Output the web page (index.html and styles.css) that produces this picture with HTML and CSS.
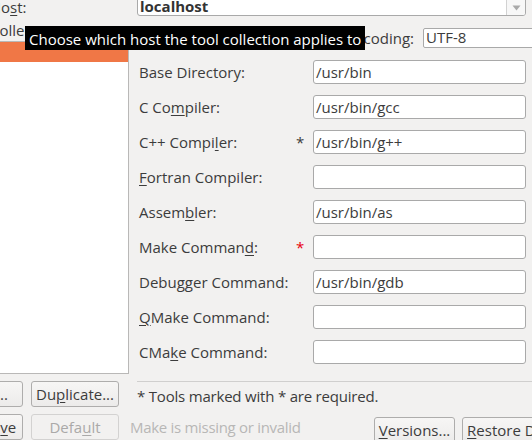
FILE: index.html
```html
<!DOCTYPE html>
<html>
<head>
<meta charset="utf-8">
<title>Build Tools</title>
<link rel="stylesheet" href="styles.css">
</head>
<body>
<div class="dialog">
  <div class="host-row">
    <div class="host-label">Ho<u>s</u>t:</div>
    <div class="combo">
      <span class="combo-text">localhost</span>
      <span class="combo-arrow"><svg width="9" height="6" viewBox="0 0 9 6"><path d="M0.5 0.5 L8.5 0.5 L4.5 5.5 Z" fill="#a9a9a9"/></svg></span>
    </div>
  </div>
  <div class="main">
    <div class="left">
      <div class="tc-label">Tool Collection:</div>
      <div class="list">
        <div class="list-item selected"></div>
      </div>
      <div class="btn-row">
        <button class="btn narrow">Add...</button>
        <button class="btn">Du<u>p</u>licate...</button>
      </div>
    </div>
    <div class="right">
      <div class="enc-row">
        <span class="enc-label">Encoding:</span>
        <div class="field enc-field">UTF-8</div>
      </div>
      <div class="form">
        <div class="lbl">Base Directory:</div><div class="star"></div><div class="field">/usr/bin</div>
        <div class="lbl">C Co<u>m</u>piler:</div><div class="star"></div><div class="field">/usr/bin/gcc</div>
        <div class="lbl">C++ Compi<u>l</u>er:</div><div class="star">*</div><div class="field">/usr/bin/g++</div>
        <div class="lbl"><u>F</u>ortran Compiler:</div><div class="star"></div><div class="field"></div>
        <div class="lbl">Assem<u>b</u>ler:</div><div class="star"></div><div class="field">/usr/bin/as</div>
        <div class="lbl">Make Comman<u>d</u>:</div><div class="star red">*</div><div class="field"></div>
        <div class="lbl">Debu<u>g</u>ger Command:</div><div class="star"></div><div class="field">/usr/bin/gdb</div>
        <div class="lbl"><u>Q</u>Make Command:</div><div class="star"></div><div class="field"></div>
        <div class="lbl">CMa<u>k</u>e Command:</div><div class="star"></div><div class="field"></div>
      </div>
      <div class="sep"></div>
      <div class="note">* Tools marked with * are required.</div>
    </div>
  </div>
  <div class="bottom-row">
    <button class="btn narrow">Remo<u>v</u>e</button>
    <button class="btn" disabled>Defa<u>u</u>lt</button>
    <span class="msg">Make is missing or invalid</span>
    <div class="right-btns">
      <button class="btn versions"><u>V</u>ersions...</button>
      <button class="btn restore"><u>R</u>estore Defaults</button>
    </div>
  </div>
</div>
<div class="tooltip">Choose which host the tool collection applies to</div>
</body>
</html>
```
FILE: styles.css
```css
* { box-sizing: border-box; }
html, body { margin: 0; padding: 0; }
body {
  width: 532px;
  height: 440px;
  overflow: hidden;
  position: relative;
  background: #f2f1f0;
  font-family: "Open Sans", "DejaVu Sans", sans-serif;
  font-size: 15px;
  color: #3c3c3c;
}
u { text-decoration: underline; text-underline-offset: 2px; text-decoration-thickness: 1px; }

.dialog {
  margin-left: -47px;
  margin-top: -5px;
  width: 635px;
}

.host-row { display: flex; height: 21px; }
.host-label {
  width: 184px;
  padding-left: 37px;
  padding-top: 2px;
  line-height: 20px;
}
.combo {
  width: 389px;
  height: 21px;
  background: #fff;
  border: 1px solid #a9a9a9;
  border-radius: 3px;
  display: flex;
  justify-content: space-between;
}
.combo-text {
  font-weight: 700;
  padding-left: 2px;
  padding-top: 1px;
  line-height: 19px;
  color: #333;
}
.combo-arrow {
  width: 19px;
  border-left: 1px solid #d2d2d2;
  background: #f7f7f7;
  border-radius: 0 2px 2px 0;
  display: flex;
  align-items: center;
  justify-content: center;
  padding-top: 4px;
}

.main {
  display: grid;
  grid-template-columns: 176px 1fr;
  column-gap: 8px;
  align-items: start;
}

.tc-label {
  margin-top: 4px;
  line-height: 20px;
  padding-left: 3px;
  white-space: nowrap;
}
.list {
  margin-top: 1px;
  height: 333px;
  background: #fff;
  border: 1px solid #b9b8b7;
}
.list-item { height: 20px; }
.list-item.selected { background: #f07746; }

.btn-row { display: flex; gap: 8px; margin-top: 7px; }

.btn {
  font-family: inherit;
  font-size: 15px;
  color: #3c3c3c;
  width: 88px;
  height: 26px;
  padding: 0;
  line-height: 24px;
  border: 1px solid #aeadac;
  border-radius: 3px;
  background: linear-gradient(#f7f6f5, #ecebea);
  text-align: center;
  white-space: nowrap;
}
.btn.narrow { width: 70px; }
.btn:disabled {
  color: #aaa9a8;
  border-color: #d3d2d1;
  background: #f2f1f0;
}

.enc-row { display: flex; gap: 9px; margin-top: 12px; height: 20px; }
.enc-label { width: 277px; text-align: right; line-height: 20px; }

.field {
  height: 24px;
  background: #fff;
  border: 1px solid #a9a9a9;
  border-radius: 3px;
  padding-left: 2px;
  line-height: 22px;
  white-space: nowrap;
  overflow: hidden;
}
.enc-field {
  width: 200px;
  height: 20px;
  line-height: 16px;
  border-radius: 2px;
}

.form {
  margin-top: 12px;
  display: grid;
  grid-template-columns: 154px 22px 213px;
  grid-auto-rows: 24px;
  row-gap: 11px;
}
.lbl { line-height: 24px; padding-left: 2px; white-space: nowrap; }
.star { line-height: 24px; padding-left: 5px; color: #3c3c3c; }
.star.red { color: #e8000d; }

.sep { margin-top: 17px; height: 1px; background: #d0cfce; }
.note { margin-top: 4px; line-height: 20px; letter-spacing: -0.2px; }

.bottom-row {
  display: flex;
  align-items: flex-start;
  gap: 8px;
  margin-top: 7px;
}
.msg {
  flex: 1;
  margin-left: 3px;
  line-height: 26px;
  color: #b8b7b6;
  letter-spacing: -0.3px;
}
.right-btns { display: flex; gap: 7px; margin-top: 3px; }
.versions { width: 81px; }
.restore { width: 126px; }

.tooltip {
  position: absolute;
  left: 25px;
  top: 26px;
  width: 340px;
  height: 24px;
  background: #000;
  color: #fff;
  padding-left: 4px;
  padding-top: 3px;
  line-height: 20px;
  white-space: nowrap;
}
```
